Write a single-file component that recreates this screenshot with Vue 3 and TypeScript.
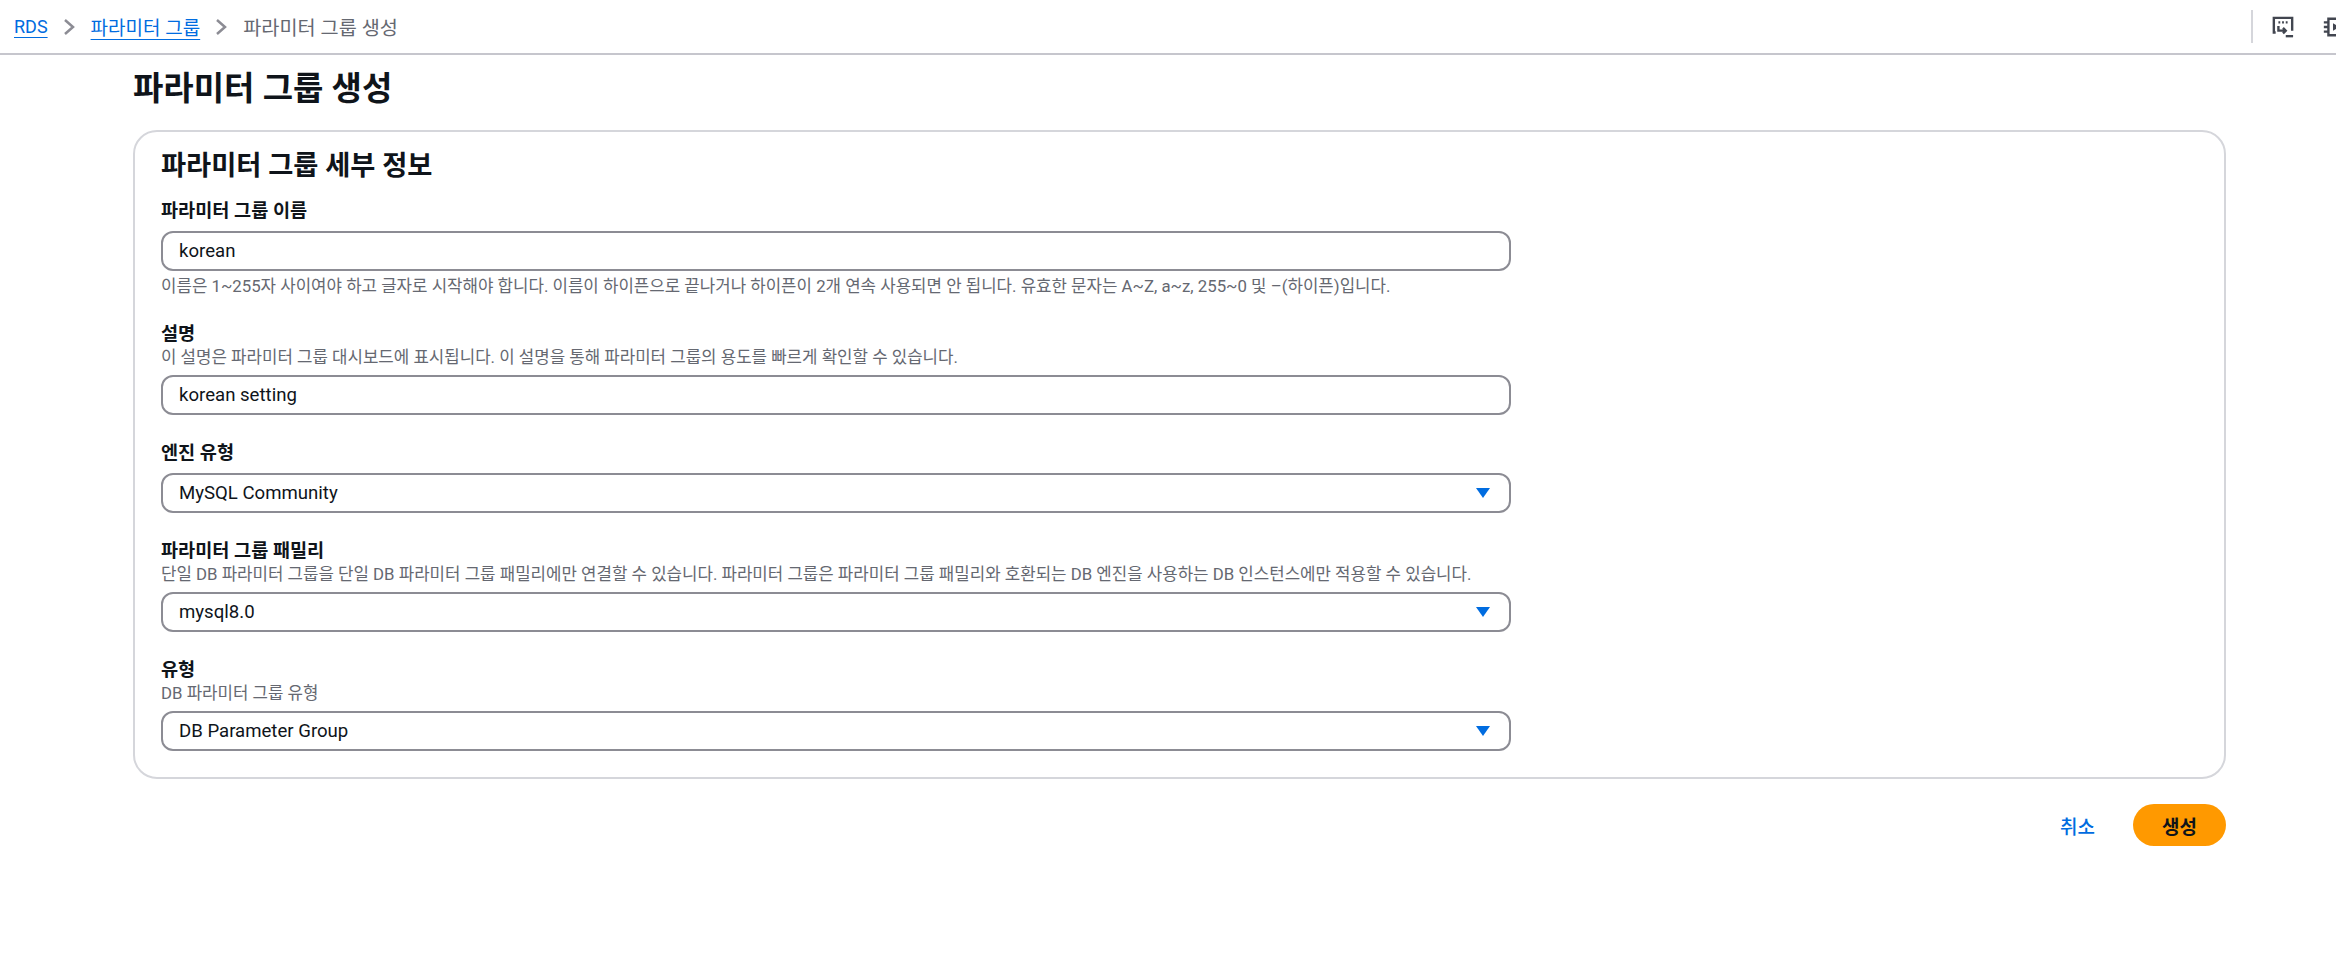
<template>
  <div class="page">
    <!-- 상단 브레드크럼 -->
    <header class="topbar">
      <nav class="crumbs">
        <a class="crumb-link crumb-root">RDS</a>
        <svg class="chevron" viewBox="0 0 11 16"><path d="M1 1l8 7-8 7" /></svg>
        <a class="crumb-link">파라미터 그룹</a>
        <svg class="chevron" viewBox="0 0 11 16"><path d="M1 1l8 7-8 7" /></svg>
        <span class="crumb-current">파라미터 그룹 생성</span>
      </nav>
      <div class="tools">
        <svg class="tool" viewBox="0 0 24 24">
          <path d="M4 18H2V2h20v14" />
          <path d="M7 7h2M11 7h2M15 7h2" />
          <path d="M7 11v5h8M12 13l3 3-3 3" />
          <path d="M15 22h8" />
        </svg>
        <svg class="tool" viewBox="0 0 24 24">
          <path d="M7 3h15v18H7z" />
          <path d="M2 7h5M2 12h5M2 17h5" />
          <path d="M12 8l7 4-7 4z" class="filled" />
        </svg>
      </div>
    </header>

    <main class="content">
      <h1 class="title">파라미터 그룹 생성</h1>

      <section class="panel">
        <h2 class="panel-title">파라미터 그룹 세부 정보</h2>

        <div v-for="field in fields" :key="field.label" class="field">
          <label class="label">{{ field.label }}</label>
          <p v-if="field.desc" class="hint">{{ field.desc }}</p>
          <div class="control">
            <span>{{ field.value }}</span>
            <svg v-if="field.select" class="caret" viewBox="0 0 16 12"><path d="M1 1h14L8 11z" /></svg>
          </div>
          <p v-if="field.after" class="hint hint-after">{{ field.after }}</p>
        </div>
      </section>

      <div class="actions">
        <button class="btn-cancel">취소</button>
        <button class="btn-primary">생성</button>
      </div>
    </main>
  </div>
</template>

<script setup lang="ts">
interface Field {
  label: string
  value: string
  desc?: string
  after?: string
  select?: boolean
}

const fields: Field[] = [
  {
    label: '파라미터 그룹 이름',
    value: 'korean',
    after: '이름은 1~255자 사이여야 하고 글자로 시작해야 합니다. 이름이 하이픈으로 끝나거나 하이픈이 2개 연속 사용되면 안 됩니다. 유효한 문자는 A~Z, a~z, 255~0 및 –(하이픈)입니다.'
  },
  {
    label: '설명',
    value: 'korean setting',
    desc: '이 설명은 파라미터 그룹 대시보드에 표시됩니다. 이 설명을 통해 파라미터 그룹의 용도를 빠르게 확인할 수 있습니다.'
  },
  { label: '엔진 유형', value: 'MySQL Community', select: true },
  {
    label: '파라미터 그룹 패밀리',
    value: 'mysql8.0',
    select: true,
    desc: '단일 DB 파라미터 그룹을 단일 DB 파라미터 그룹 패밀리에만 연결할 수 있습니다. 파라미터 그룹은 파라미터 그룹 패밀리와 호환되는 DB 엔진을 사용하는 DB 인스턴스에만 적용할 수 있습니다.'
  },
  { label: '유형', value: 'DB Parameter Group', select: true, desc: 'DB 파라미터 그룹 유형' }
]
</script>

<style>
html, body { margin: 0; background: #fff; }
</style>

<style scoped>
.page {
  min-height: 967px;
  font-family: Roboto, "Noto Sans CJK KR", sans-serif;
  color: #0f141a;
}

.topbar {
  display: flex;
  justify-content: space-between;
  align-items: center;
  height: 53px;
  border-bottom: 2px solid #c6c6cd;
  padding: 0 0 0 14px;
  box-sizing: content-box;
}

.crumbs {
  display: flex;
  align-items: center;
  gap: 16px;
  font-size: 19px;
}

.crumb-link {
  color: #006ce0;
  text-decoration: underline;
  text-underline-offset: 4px;
}

.crumb-root { font-size: 18px; }

.crumb-current {
  font-size: 19.7px;
  color: #656871;
}

.chevron {
  width: 11px;
  height: 16px;
  fill: none;
  stroke: #8c8c94;
  stroke-width: 2.5;
}

.tools {
  display: flex;
  align-items: center;
  gap: 28px;
  width: 85px;
  height: 33px;
  border-left: 2px solid #d5d6db;
  padding-left: 19px;
  overflow: hidden;
  flex-shrink: 0;
  box-sizing: border-box;
}

.tool {
  width: 22px;
  height: 22px;
  flex-shrink: 0;
  fill: none;
  stroke: #424650;
  stroke-width: 2.6;
}

.tool .filled { fill: #424650; stroke: none; }

.content {
  width: 2093px;
  margin-left: 133px;
}

.title {
  margin: 13px 0 20px;
  font-size: 33px;
  line-height: 42px;
  font-weight: 700;
}

.panel {
  border: 2px solid #d5d6db;
  border-radius: 24px;
  padding: 17px 26px 26px;
  box-sizing: border-box;
}

.panel-title {
  margin: 0 0 16px;
  font-size: 27.3px;
  line-height: 34px;
  font-weight: 700;
}

.field {
  width: 1350px;
  margin-bottom: 26px;
}

.field:last-child { margin-bottom: 0; }

.label {
  display: block;
  font-size: 18.6px;
  line-height: 24px;
  font-weight: 700;
}

.hint {
  margin: 1px 0 8px;
  font-size: 16.8px;
  line-height: 20px;
  color: #656871;
}

.hint-after { margin: 5px 0 8px; }

.control {
  display: flex;
  align-items: center;
  justify-content: space-between;
  height: 40px;
  margin-top: 8px;
  padding: 0 18px 0 16px;
  border: 2px solid #8c8c94;
  border-radius: 12px;
  font-size: 18.6px;
  box-sizing: border-box;
}

.hint + .control { margin-top: 0; }

.caret {
  width: 16px;
  height: 12px;
  fill: #006ce0;
}

.actions {
  display: flex;
  justify-content: flex-end;
  align-items: center;
  gap: 38px;
  margin-top: 25px;
}

.btn-cancel, .btn-primary {
  border: none;
  background: none;
  font-family: inherit;
  font-size: 19px;
  font-weight: 500;
  padding: 0;
}

.btn-cancel { color: #006ce0; }

.btn-primary {
  width: 93px;
  height: 42px;
  background: #ff9900;
  border-radius: 21px;
  color: #0f141a;
  font-weight: 700;
}
</style>
